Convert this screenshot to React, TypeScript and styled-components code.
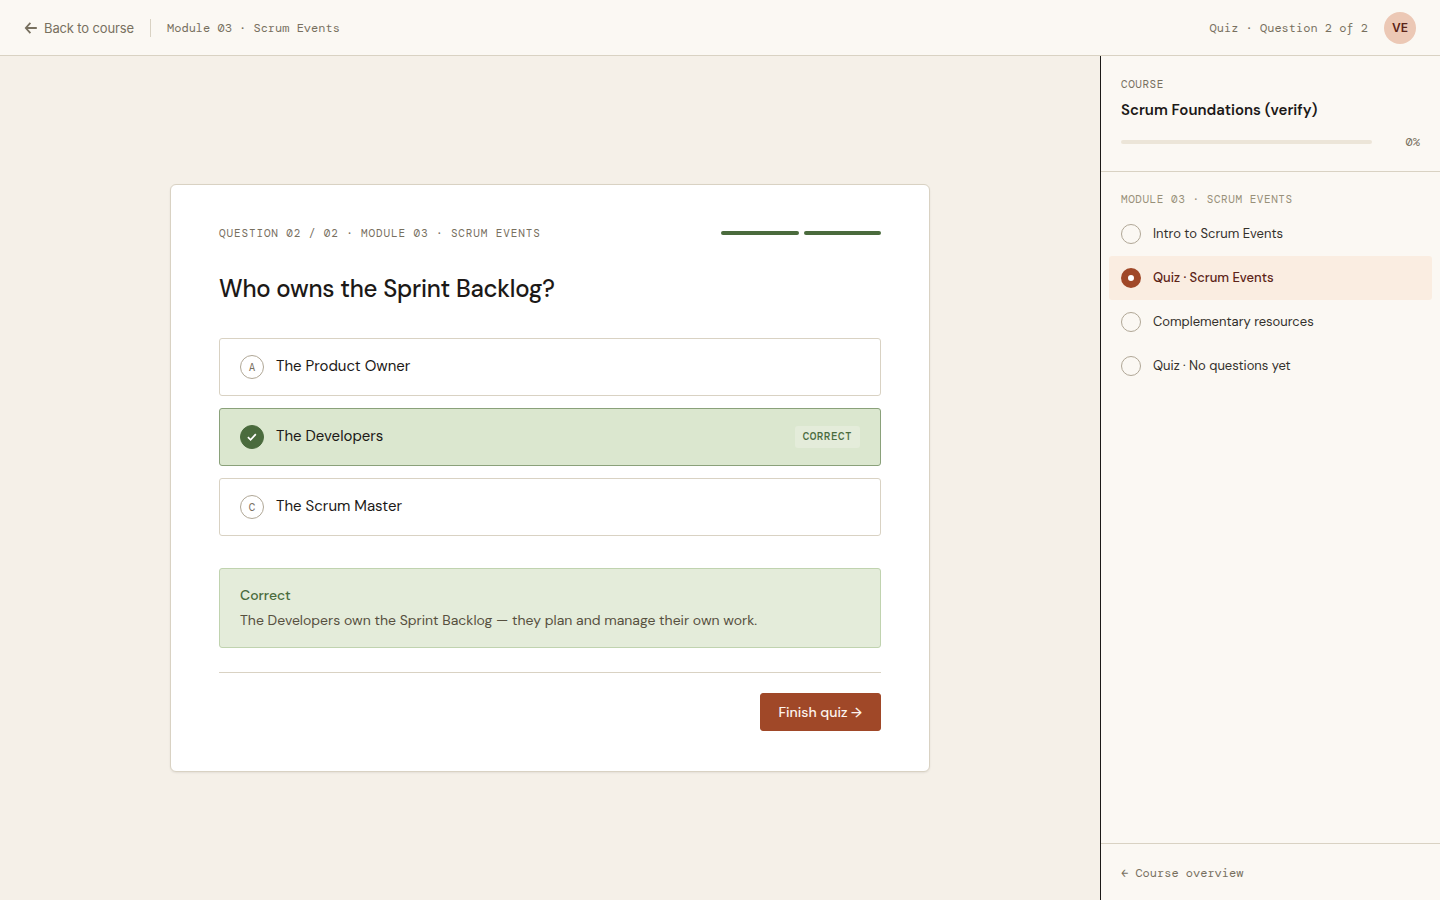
import React from "react";
import styled, { createGlobalStyle, css } from "styled-components";

const color = {
  page: "#f5f0e8",
  panel: "#fbf8f3",
  card: "#ffffff",
  line: "#d9d2c3",
  track: "#ece5d8",
  ring: "#b0a796",
  ink: "#1c1917",
  body: "#33302b",
  soft: "#57503f",
  muted: "#78705f",
  faint: "#989079",
  green: "#4a6b3d",
  greenFill: "#dbe7cf",
  greenSoft: "#e4ecda",
  greenLine: "#c0d3af",
  greenEdge: "#8aa17a",
  rust: "#a04828",
  rustDark: "#5c2418",
  rustSoft: "#faede1",
  avatar: "#ecc8b5",
};

const sans = `"DM Sans", Inter, "Liberation Sans", sans-serif`;
const ui = `Inter, "Liberation Sans", sans-serif`;
const mono = `"DM Mono", "JetBrains Mono", "Liberation Mono", monospace`;

const GlobalStyle = createGlobalStyle`
  *, *::before, *::after { box-sizing: border-box; }
  body { margin: 0; background: ${color.page}; color: ${color.ink}; font-family: ${sans}; }
  button { font: inherit; color: inherit; cursor: pointer; }
  a { color: inherit; text-decoration: none; }
  h1, h2, p, ul { margin: 0; padding: 0; }
  ul { list-style: none; }
`;

const Shell = styled.div`
  display: flex;
  flex-direction: column;
  min-height: 100vh;
`;

const TopBar = styled.header`
  display: flex;
  align-items: center;
  gap: 16px;
  height: 56px;
  padding: 0 24px;
  background: ${color.panel};
  border-bottom: 1px solid ${color.line};
`;

const BackLink = styled.a`
  display: flex;
  align-items: center;
  gap: 6px;
  font: 400 13px/20px ${ui};
  letter-spacing: -0.01em;
  color: ${color.muted};
`;

const Separator = styled.span`
  width: 1px;
  height: 18px;
  background: ${color.line};
`;

const Meta = styled.span`
  font: 400 12px/18px ${mono};
  color: ${color.muted};
`;

const TopRight = styled.div`
  display: flex;
  align-items: center;
  gap: 16px;
  margin-left: auto;
`;

const Avatar = styled.span`
  display: grid;
  place-items: center;
  width: 32px;
  height: 32px;
  border-radius: 50%;
  background: ${color.avatar};
  color: ${color.rustDark};
  font: 600 12px/16px ${ui};
  letter-spacing: -0.01em;
`;

const Body = styled.div`
  display: flex;
  flex: 1;
`;

const Stage = styled.main`
  display: flex;
  flex: 1;
  align-items: center;
  justify-content: center;
  padding: 32px;
`;

const Card = styled.section`
  width: 100%;
  max-width: 760px;
  padding: 40px 48px;
  background: ${color.card};
  border: 1px solid ${color.line};
  border-radius: 6px;
  box-shadow: 0 1px 2px rgba(28, 25, 23, 0.08);
`;

const CardHead = styled.div`
  display: flex;
  align-items: center;
  justify-content: space-between;
`;

const Eyebrow = styled.p`
  font: 400 11px/16px ${mono};
  letter-spacing: 0.08em;
  text-transform: uppercase;
  color: ${color.muted};
`;

const Steps = styled.div`
  display: flex;
  gap: 5px;
  width: 160px;
`;

const Step = styled.span`
  flex: 1;
  height: 4px;
  border-radius: 2px;
  background: ${color.green};
`;

const Question = styled.h1`
  margin: 32px 0 33px;
  font-size: 24px;
  line-height: 32px;
  font-weight: 500;
  letter-spacing: -0.01em;
`;

const Options = styled.div`
  display: grid;
  gap: 12px;
`;

const Option = styled.button<{ $correct?: boolean }>`
  display: flex;
  align-items: flex-start;
  gap: 12px;
  width: 100%;
  padding: 16px 20px;
  text-align: left;
  font-size: 15px;
  line-height: 22px;
  background: ${(p) => (p.$correct ? color.greenFill : color.card)};
  border: 1px solid ${(p) => (p.$correct ? color.greenEdge : color.line)};
  border-radius: 3px;
`;

const Marker = styled.span<{ $correct?: boolean }>`
  display: grid;
  place-items: center;
  width: 24px;
  height: 24px;
  border: 1px solid ${color.ring};
  border-radius: 50%;
  font: 400 11px/16px ${mono};
  color: ${color.muted};
  ${(p) =>
    p.$correct &&
    css`
      background: ${color.green};
      border-color: ${color.green};
      color: #fff;
    `}
`;

const Badge = styled.span`
  align-self: center;
  margin-left: auto;
  padding: 2px 8px 4px;
  border-radius: 3px;
  background: ${color.greenSoft};
  color: ${color.green};
  font: 500 11px/16px ${mono};
  letter-spacing: 0.04em;
  text-transform: uppercase;
`;

const Feedback = styled.div`
  margin-top: 32px;
  padding: 16px 20px;
  background: ${color.greenSoft};
  border: 1px solid ${color.greenLine};
  border-radius: 3px;
`;

const FeedbackTitle = styled.p`
  margin-bottom: 4px;
  font-size: 14px;
  line-height: 20px;
  font-weight: 500;
  color: ${color.green};
`;

const FeedbackText = styled.p`
  font-size: 14px;
  line-height: 22px;
  color: ${color.soft};
`;

const CardFoot = styled.div`
  display: flex;
  justify-content: flex-end;
  margin-top: 24px;
  padding-top: 20px;
  border-top: 1px solid ${color.line};
`;

const Primary = styled.button`
  padding: 8px 18px;
  border: 1px solid ${color.rust};
  border-radius: 3px;
  background: ${color.rust};
  color: #fdf4ee;
  font-size: 14px;
  line-height: 20px;
  font-weight: 500;
`;

const Sidebar = styled.aside`
  display: flex;
  flex-direction: column;
  width: 340px;
  background: ${color.panel};
  border-left: 1px solid ${color.ink};
`;

const CourseHead = styled.div`
  padding: 20px;
  border-bottom: 1px solid ${color.line};
`;

const SideLabel = styled.p<{ $faint?: boolean }>`
  font: 400 11px/16px ${mono};
  letter-spacing: 0.05em;
  text-transform: uppercase;
  color: ${(p) => (p.$faint ? color.faint : color.muted)};
`;

const CourseTitle = styled.h2`
  margin: 8px 0 12px;
  font-size: 15px;
  line-height: 21px;
  font-weight: 600;
`;

const ProgressRow = styled.div`
  display: flex;
  align-items: center;
  gap: 12px;
`;

const Track = styled.div`
  flex: 1;
  height: 4px;
  border-radius: 2px;
  background: ${color.track};
`;

const Percent = styled(Meta)`
  width: 36px;
  text-align: right;
`;

const Lessons = styled.nav`
  flex: 1;
  padding: 19px 8px;
`;

const LessonsLabel = styled(SideLabel)`
  padding: 0 12px 5px;
`;

const Lesson = styled.a<{ $active?: boolean }>`
  display: flex;
  align-items: center;
  gap: 12px;
  padding: 12px;
  border-radius: 3px;
  font-size: 13px;
  line-height: 20px;
  font-weight: ${(p) => (p.$active ? 500 : 400)};
  color: ${(p) => (p.$active ? color.rustDark : color.body)};
  background: ${(p) => (p.$active ? color.rustSoft : "transparent")};
`;

const Dot = styled.span<{ $active?: boolean }>`
  width: 20px;
  height: 20px;
  border-radius: 50%;
  border: ${(p) => (p.$active ? `7px solid ${color.rust}` : `1px solid ${color.ring}`)};
  background: ${(p) => (p.$active ? "#fff" : "transparent")};
`;

const SideFoot = styled.div`
  padding: 20px 20px 18px;
  border-top: 1px solid ${color.line};
`;

const OverviewLink = styled.a`
  display: block;
  font: 400 12px/18px ${mono};
  color: ${color.muted};
`;

const ArrowLeft = () => (
  <svg width="14" height="14" viewBox="0 0 14 14" fill="none" stroke="currentColor" strokeWidth="1.8" aria-hidden="true">
    <path d="M12.8 7H1.8M6.4 1.8 1.8 7l4.6 5.2" />
  </svg>
);

const Check = () => (
  <svg width="12" height="12" viewBox="0 0 12 12" fill="none" stroke="currentColor" strokeWidth="1.7" aria-hidden="true">
    <path d="M1.9 6.2 4.6 8.8 9.8 3.2" />
  </svg>
);

const options = [
  { key: "A", text: "The Product Owner" },
  { key: "B", text: "The Developers", correct: true },
  { key: "C", text: "The Scrum Master" },
];

const lessons = [
  { title: "Intro to Scrum Events" },
  { title: "Quiz · Scrum Events", active: true },
  { title: "Complementary resources" },
  { title: "Quiz · No questions yet" },
];

export default function App() {
  return (
    <Shell>
      <GlobalStyle />
      <TopBar>
        <BackLink href="#course">
          <ArrowLeft />
          Back to course
        </BackLink>
        <Separator />
        <Meta>Module 03 · Scrum Events</Meta>
        <TopRight>
          <Meta>Quiz · Question 2 of 2</Meta>
          <Avatar>VE</Avatar>
        </TopRight>
      </TopBar>
      <Body>
        <Stage>
          <Card>
            <CardHead>
              <Eyebrow>Question 02 / 02 · Module 03 · Scrum Events</Eyebrow>
              <Steps>
                <Step />
                <Step />
              </Steps>
            </CardHead>
            <Question>Who owns the Sprint Backlog?</Question>
            <Options>
              {options.map((o) => (
                <Option key={o.key} type="button" $correct={o.correct} aria-pressed={!!o.correct}>
                  <Marker $correct={o.correct}>{o.correct ? <Check /> : o.key}</Marker>
                  {o.text}
                  {o.correct && <Badge>Correct</Badge>}
                </Option>
              ))}
            </Options>
            <Feedback role="status">
              <FeedbackTitle>Correct</FeedbackTitle>
              <FeedbackText>The Developers own the Sprint Backlog — they plan and manage their own work.</FeedbackText>
            </Feedback>
            <CardFoot>
              <Primary type="button">Finish quiz →</Primary>
            </CardFoot>
          </Card>
        </Stage>
        <Sidebar>
          <CourseHead>
            <SideLabel>Course</SideLabel>
            <CourseTitle>Scrum Foundations (verify)</CourseTitle>
            <ProgressRow>
              <Track role="progressbar" aria-label="Course progress" aria-valuenow={0} />
              <Percent>0%</Percent>
            </ProgressRow>
          </CourseHead>
          <Lessons>
            <LessonsLabel $faint>Module 03 · Scrum Events</LessonsLabel>
            <ul>
              {lessons.map((l) => (
                <li key={l.title}>
                  <Lesson href="#lesson" $active={l.active} aria-current={l.active ? "page" : undefined}>
                    <Dot $active={l.active} />
                    {l.title}
                  </Lesson>
                </li>
              ))}
            </ul>
          </Lessons>
          <SideFoot>
            <OverviewLink href="#overview">← Course overview</OverviewLink>
          </SideFoot>
        </Sidebar>
      </Body>
    </Shell>
  );
}
